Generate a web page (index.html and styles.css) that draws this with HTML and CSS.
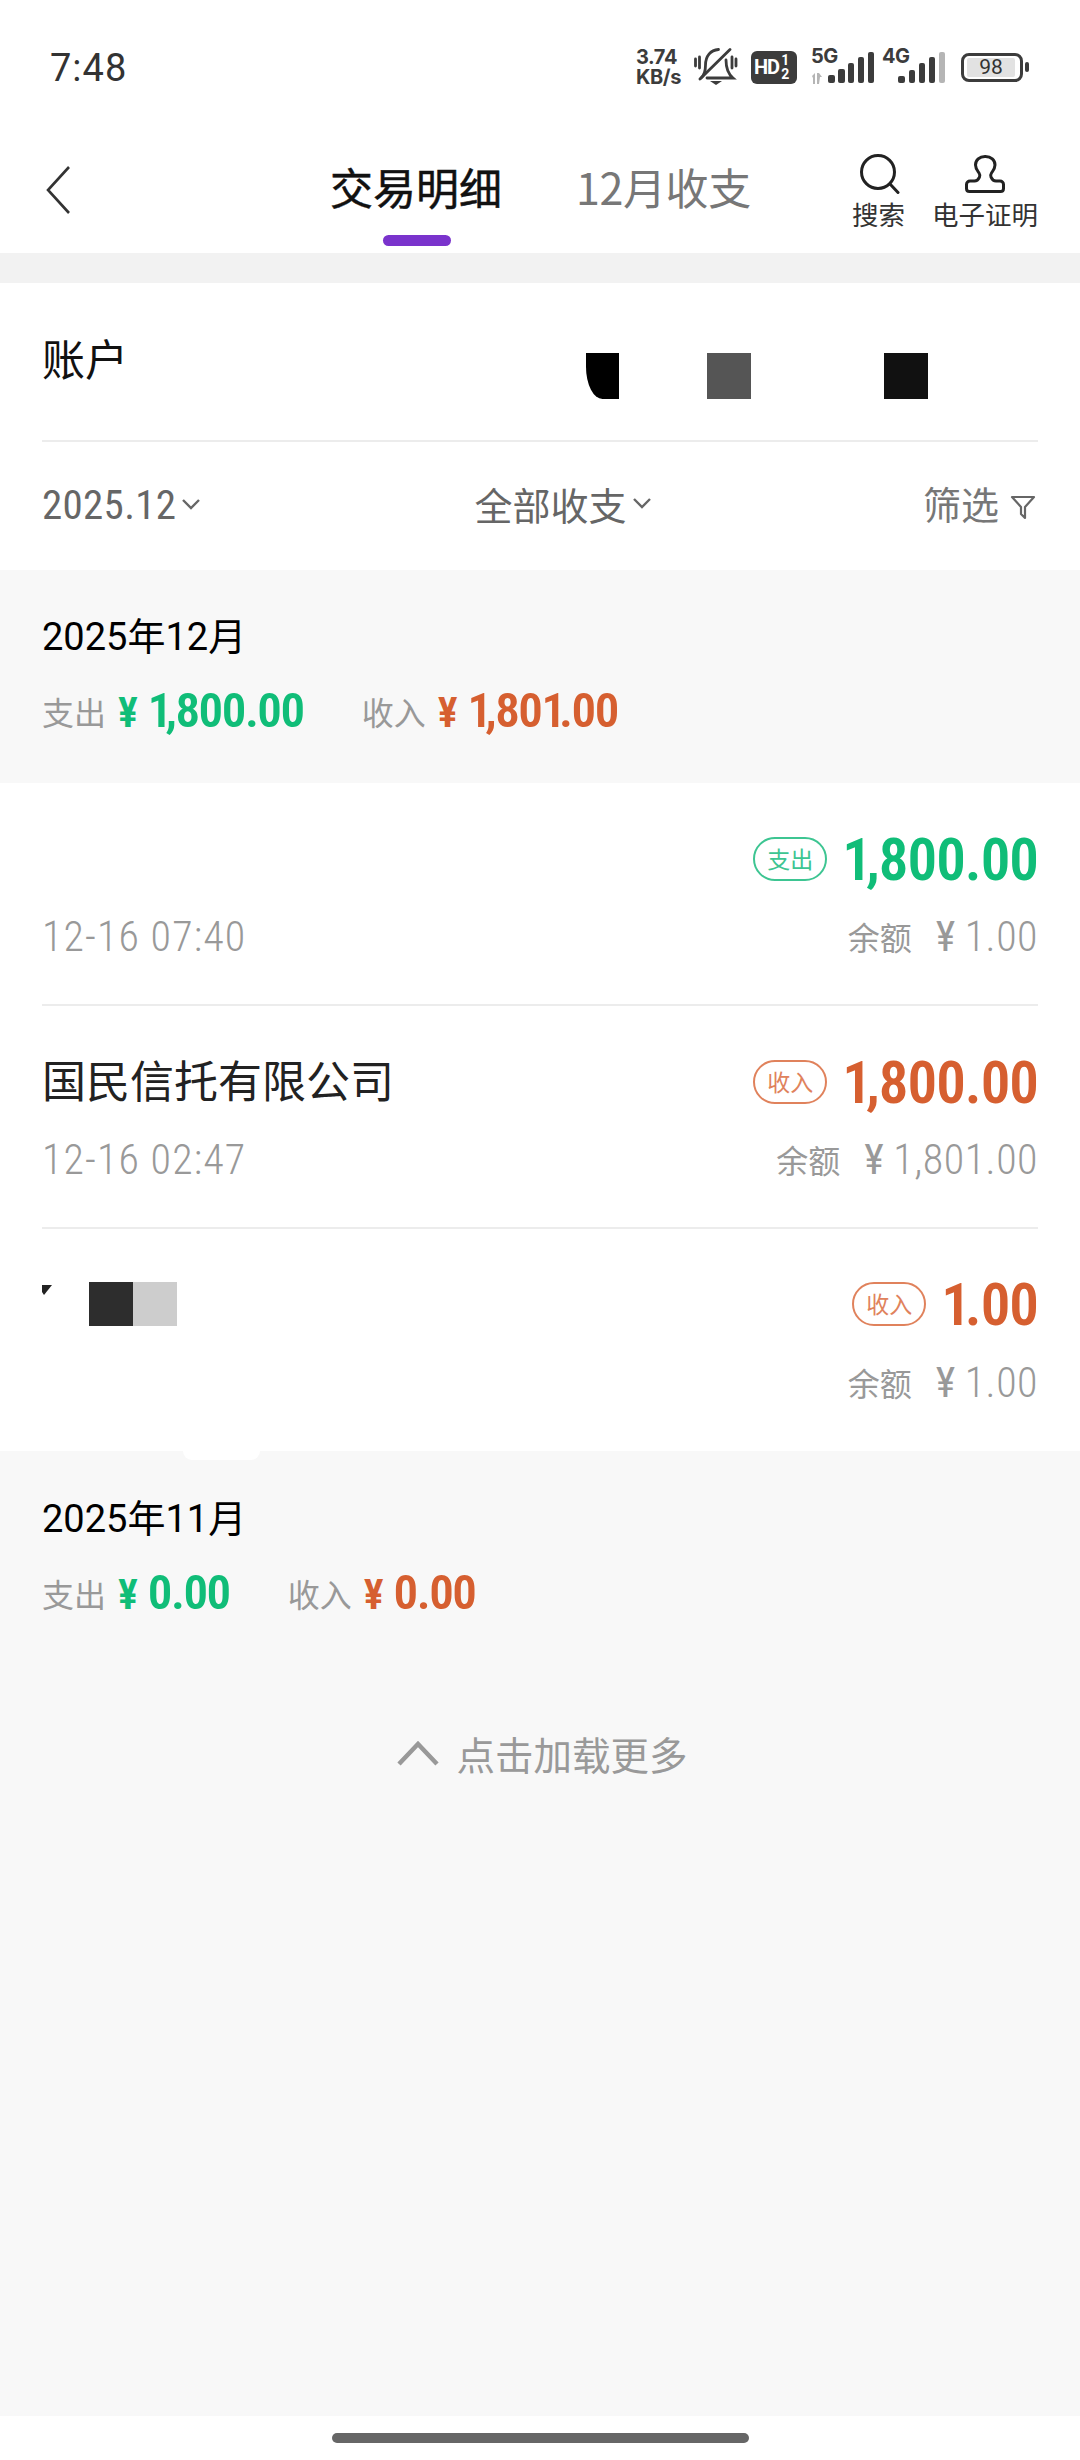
FILE: index.html
```html
<!DOCTYPE html>
<html lang="zh">
<head>
<meta charset="utf-8">
<title>交易明细</title>
<link rel="stylesheet" href="styles.css">
</head>
<body>
<div class="page">
  <header class="status">
    <span class="clock">7:48</span>
    <div class="status-icons">
      <span class="speed">3.74<br>KB/s</span>
      <svg class="ic-bell" viewBox="0 0 44 38" width="44" height="38"><g fill="none" stroke="#3c3c3c" stroke-width="2.800" stroke-linecap="round"><path d="M1.500 11v7M5.500 9v11M38 9v11M42 11v7"/><path d="M7 30c3.500-3 4.500-7 4.500-13 0-9 5-15 13-15.500M32 12c0 7 1 13 7 18H13"/><path d="M6 31 36 1.500"/></g><path d="M16 33h12l-6 4z" fill="#3c3c3c"/></svg>
      <span class="hd">HD<span class="hd-frac">1<br>2</span></span>
      <div class="net">
        <span class="net-label">5G</span>
        <svg viewBox="0 0 64 34" width="64" height="34"><g fill="#b5b5b5"><path d="M1 26l3-3 0 11h-2v-6zM6 23h2l3 4h-2l-1 7h-2z"/></g><g fill="#3c3c3c"><rect x="17" y="25" width="7" height="8" rx="2"/><rect x="27" y="19" width="7" height="14" rx="2"/><rect x="37" y="13" width="6" height="20" rx="2"/><rect x="47" y="7" width="6" height="26" rx="2"/><rect x="57" y="2" width="6" height="31" rx="2"/></g></svg>
      </div>
      <div class="net">
        <span class="net-label">4G</span>
        <svg viewBox="0 0 64 34" width="64" height="34"><g fill="#3c3c3c"><rect x="16" y="26" width="7" height="7" rx="2"/><rect x="27" y="20" width="6" height="13" rx="2"/><rect x="37" y="13" width="6" height="20" rx="2"/><rect x="47" y="7" width="6" height="26" rx="2"/></g><rect x="57" y="2" width="6" height="31" rx="2" fill="#b5b5b5"/></svg>
      </div>
      <div class="battery"><span class="battery-body"><span class="battery-fill">98</span></span><span class="battery-cap"></span></div>
    </div>
  </header>

  <nav class="nav">
    <svg class="back" viewBox="0 0 28 50" width="28" height="50"><path d="M25 2 4 25l21 23" fill="none" stroke="#333" stroke-width="2.600"/></svg>
    <div class="tabs">
      <div class="tab tab-on">交易明细<span class="tab-bar"></span></div>
      <div class="tab tab-off">12月收支</div>
    </div>
    <div class="tools">
      <div class="tool">
        <svg viewBox="0 0 42 42" width="42" height="42"><g fill="none" stroke="#222" stroke-width="3"><circle cx="20" cy="19" r="16.500"/><path d="m32 31 8 8.500" stroke-linecap="round"/></g></svg>
        <span>搜索</span>
      </div>
      <div class="tool">
        <svg viewBox="0 0 42 42" width="42" height="42"><path d="M21 3.500c-5.500 0-9.500 3.700-9.500 8.500 0 3.500 2.200 6 3.500 8 1 1.500 1 3 .5 4s-1.500 4-5 4H6c-2 0-3.500 1.500-3.500 3.500v4c0 2 1 3 3 3h31c2 0 3-1 3-3v-4c0-2-1.500-3.500-3.500-3.500h-4c-3.500 0-4.500-3-5-4s-.5-2.500.5-4c1.300-2 3.500-4.500 3.500-8 0-4.800-4-8.500-9.500-8.500z" fill="none" stroke="#222" stroke-width="3"/></svg>
        <span>电子证明</span>
      </div>
    </div>
  </nav>

  <div class="band"></div>

  <section class="account">
    <div class="account-row">
      <span class="account-label">账户</span>
      <div class="masks">
        <i class="mask mask-a"></i>
        <i class="mask mask-b"></i>
        <i class="mask mask-c"></i>
      </div>
    </div>
    <div class="filters">
      <span class="filter filter-date">2025.12<svg class="chev" viewBox="0 0 20 12" width="20" height="12"><path d="m2 2 8 8 8-8" fill="none" stroke="#666" stroke-width="2.400"/></svg></span>
      <span class="filter filter-mid">全部收支<svg class="chev" viewBox="0 0 20 12" width="20" height="12"><path d="m2 2 8 8 8-8" fill="none" stroke="#666" stroke-width="2.400"/></svg></span>
      <span class="filter filter-end">筛选<svg class="funnel" viewBox="0 0 26 26" width="26" height="26"><path d="M2 3h22l-9 10v11l-4-4v-7z" fill="none" stroke="#666" stroke-width="2.200" stroke-linejoin="round"/></svg></span>
    </div>
  </section>

  <section class="month">
    <h2 class="month-title">2025年12月</h2>
    <div class="totals">
      <span class="total-label">支出</span><span class="total out"><b class="yen">¥</b><span class="one">1</span>,800.00</span>
      <span class="total-label label-in">收入</span><span class="total in"><b class="yen">¥</b><span class="one">1</span>,80<span class="one">1</span>.00</span>
    </div>
  </section>

  <section class="list">
    <article class="row">
      <div class="line">
        <span class="name"></span>
        <span class="amount-wrap"><span class="tag tag-out">支出</span><span class="amount out"><span class="one">1</span>,800.00</span></span>
      </div>
      <div class="line line-sub">
        <span class="time">12-16 07:40</span>
        <span class="balance"><em>余额</em><b class="yen-thin">¥</b>1.00</span>
      </div>
    </article>
    <article class="row">
      <div class="line">
        <span class="name">国民信托有限公司</span>
        <span class="amount-wrap"><span class="tag tag-in">收入</span><span class="amount in"><span class="one">1</span>,800.00</span></span>
      </div>
      <div class="line line-sub">
        <span class="time">12-16 02:47</span>
        <span class="balance"><em>余额</em><b class="yen-thin">¥</b>1,801.00</span>
      </div>
    </article>
    <article class="row row-last">
      <div class="line">
        <span class="name-masks"><i class="speck"></i><i class="mask mask-d"></i><i class="mask mask-e"></i></span>
        <span class="amount-wrap"><span class="tag tag-in">收入</span><span class="amount in"><span class="one">1</span>.00</span></span>
      </div>
      <div class="line line-sub line-end">
        <span class="balance"><em>余额</em><b class="yen-thin">¥</b>1.00</span>
      </div>
    </article>
  </section>

  <section class="month month-tail">
    <h2 class="month-title">2025年11月</h2>
    <div class="totals">
      <span class="total-label">支出</span><span class="total out"><b class="yen">¥</b>0.00</span>
      <span class="total-label label-in">收入</span><span class="total in"><b class="yen">¥</b>0.00</span>
    </div>
    <div class="more">
      <svg viewBox="0 0 44 28" width="44" height="28"><path d="m3 25 19-20 19 20" fill="none" stroke="#999" stroke-width="4.500"/></svg>
      <span>点击加载更多</span>
    </div>
  </section>

  <footer class="home"><span class="home-bar"></span></footer>
</div>
</body>
</html>
```

FILE: styles.css
```css
* { box-sizing: border-box; margin: 0; padding: 0; }
html, body { width: 1080px; height: 2460px; background: #fff; overflow: hidden; }
body { font-family: "Noto Sans CJK SC", "Noto Sans", sans-serif; color: #111; }
.page { width: 1080px; height: 2460px; display: flex; flex-direction: column; }
em, i, b { font-style: normal; font-weight: normal; }

.status { height: 136px; padding: 46px 51px 0 50px; display: flex; justify-content: space-between; align-items: flex-start; }
.clock { font: 450 38px/44px Roboto, sans-serif; color: #333; letter-spacing: 1px; }
.status-icons { display: flex; align-items: center; height: 44px; margin-top: -1px; color: #3c3c3c; }
.speed { font: 700 20px/20px Inter, sans-serif; width: 47px; white-space: nowrap; letter-spacing: -.4px; }
.ic-bell { margin-left: 11px; }
.hd { width: 46px; height: 33px; margin-left: 13px; border-radius: 6px; background: #3c3c3c; color: #fff; display: flex; align-items: center; padding-left: 3px; font: 700 20px/1 Roboto, sans-serif; letter-spacing: -1px; }
.hd-frac { font-size: 14px; line-height: 14px; margin-left: 2px; text-align: center; }
.net { position: relative; width: 64px; height: 34px; margin-left: 7px; }
.hd + .net { margin-left: 14px; }
.net svg { display: block; }
.net-label { position: absolute; left: 0; top: -3px; font: 700 20px/19px Inter, sans-serif; letter-spacing: -.5px; }
.battery { display: flex; align-items: center; margin-left: 15px; gap: 2px; }
.battery-body { width: 62px; height: 29px; border: 3px solid #3c3c3c; border-radius: 8px; padding: 2px 5px 2px 3px; display: flex; }
.battery-fill { flex: 1; background: #e2e2e2; border-radius: 2px; font: 400 21px/19px Roboto, sans-serif; text-align: center; color: #333; }
.battery-cap { width: 4px; height: 10px; background: #3c3c3c; border-radius: 2px; }

.nav { height: 117px; padding: 0 42px 0 44px; display: flex; align-items: flex-start; position: relative; flex: none; }
.back { margin-top: 29px; }
.tabs { display: flex; gap: 74px; margin-left: 258px; margin-top: 20px; }
.tab { position: relative; font-size: 43px; line-height: 60px; color: #777; }
.tab-off { letter-spacing: -.4px; }
.tab-on { color: #111; width: 172px; -webkit-text-stroke: .5px #111; }
.tab-bar { position: absolute; left: 53px; top: 79px; width: 68px; height: 11px; border-radius: 6px; background: #7a33cc; }
.tools { display: flex; gap: 27px; margin-left: auto; margin-top: 17px; }
.tool { display: flex; flex-direction: column; align-items: center; font-size: 26.500px; line-height: 32px; color: #333; }
.tool svg { display: block; margin-bottom: 3px; }

.band { height: 30px; background: #f2f2f2; flex: none; }

.account { background: #fff; height: 287px; padding: 0 42px; flex: none; }
.account-row { height: 159px; display: flex; border-bottom: 2px solid #ececec; }
.account-label { font-size: 43px; line-height: 58px; margin-top: 45px; }
.masks { display: flex; margin-top: 70px; height: 46px; margin-left: 458px; }
.mask { display: block; height: 46px; }
.mask-a { width: 33px; background: #000; border-radius: 0 0 0 50% / 0 0 0 70%; }
.mask-b { width: 44px; background: #555; margin-left: 88px; }
.mask-c { width: 44px; background: #111; margin-left: 133px; }
.filters { height: 126px; display: grid; grid-template-columns: 1fr auto 1fr; align-items: center; color: #666; }
.filter { display: flex; align-items: center; font-size: 38px; line-height: 54px; }
.filter-date { font: 380 41px/54px Roboto, sans-serif; font-stretch: 75%; letter-spacing: .3px; }
.filter-mid { margin-left: 46px; margin-bottom: 2px; }
.filter-end { justify-self: end; color: #777; margin-bottom: 4px; }
.chev { margin-left: 5px; margin-top: -2px; }
.funnel { margin-left: 11px; margin-top: 8px; margin-right: 2px; }

.month { background: #f8f8f8; height: 213px; padding: 40px 42px 0; flex: none; }
.month-title { font-size: 38px; line-height: 54px; font-weight: 400; color: #000; font-family: Roboto, "Noto Sans CJK SC", sans-serif; }
.totals { display: flex; align-items: center; margin-top: 22px; height: 52px; }
.total-label { font-size: 32px; color: #999; margin-right: 12px; line-height: 52px; margin-bottom: 2px; }
.label-in { margin-left: 58px; }
.total { font: 600 49px/52px Roboto, sans-serif; font-stretch: 75%; letter-spacing: -1.500px; }
.total .one { letter-spacing: -7px; }
.yen { font-weight: 600; margin-right: 10px; font-size: 42px; letter-spacing: 0; }
.out { color: #10bd78; }
.in { color: #d65f30; }

.list { background: #fff; height: 668px; flex: none; padding: 0 42px; }
.row { height: 223px; padding-top: 47px; border-bottom: 2px solid #ececec; }
.row-last { border-bottom: 0; height: 222px; padding-top: 46px; position: relative; }
.row-last::after { content: ""; position: absolute; left: 141px; bottom: -9px; width: 77px; height: 9px; background: #fff; border-radius: 0 0 14px 14px; }
.line { display: flex; justify-content: space-between; align-items: center; height: 60px; }
.line-sub { margin-top: 20px; height: 54px; }
.row-last .line-sub { margin-top: 21px; }
.line-end { justify-content: flex-end; }
.name { font-size: 44px; color: #222; line-height: 60px; margin-bottom: 8px; }
.amount-wrap { display: flex; align-items: center; }
.tag { width: 74px; height: 44px; border: 2px solid; border-radius: 22px; font-size: 23px; line-height: 38px; text-align: center; margin-right: 15px; margin-bottom: 2px; }
.tag-out { color: #3dc592; border-color: #3dc592; }
.tag-in { color: #e0825c; border-color: #e0825c; }
.amount { font: 600 59px/60px Roboto, sans-serif; font-stretch: 75%; letter-spacing: -1px; }
.amount .one { letter-spacing: -6px; }
.time { font: 300 42px/54px Roboto, sans-serif; font-stretch: 75%; color: #999; letter-spacing: 1.100px; }
.balance { font: 300 42px/54px Roboto, sans-serif; font-stretch: 75%; color: #999; display: flex; align-items: center; letter-spacing: .5px; }
.balance em { font: 400 32px/54px "Noto Sans CJK SC", sans-serif; margin-right: 24px; margin-bottom: 2px; letter-spacing: 0; }
.yen-thin { margin-right: 9px; }
.name-masks { display: flex; align-items: flex-start; margin-top: -2px; }
.speck { width: 10px; height: 10px; background: #222; clip-path: polygon(0 0, 100% 0, 20% 100%, 0 70%); margin-top: 3px; margin-right: 37px; }
.mask-d { width: 44px; height: 44px; background: #2d2d2d; }
.mask-e { width: 44px; height: 44px; background: #cdcdcd; }

.month-tail { flex: 1; padding-top: 41px; height: auto; }
.more { margin-top: 106px; display: flex; justify-content: center; align-items: center; gap: 16px; color: #999; font-size: 38.500px; line-height: 54px; margin-left: 4px; }

.home { height: 44px; flex: none; background: #fff; display: flex; justify-content: center; padding-top: 17px; }
.home-bar { width: 417px; height: 10px; border-radius: 5px; background: #666; }
```
